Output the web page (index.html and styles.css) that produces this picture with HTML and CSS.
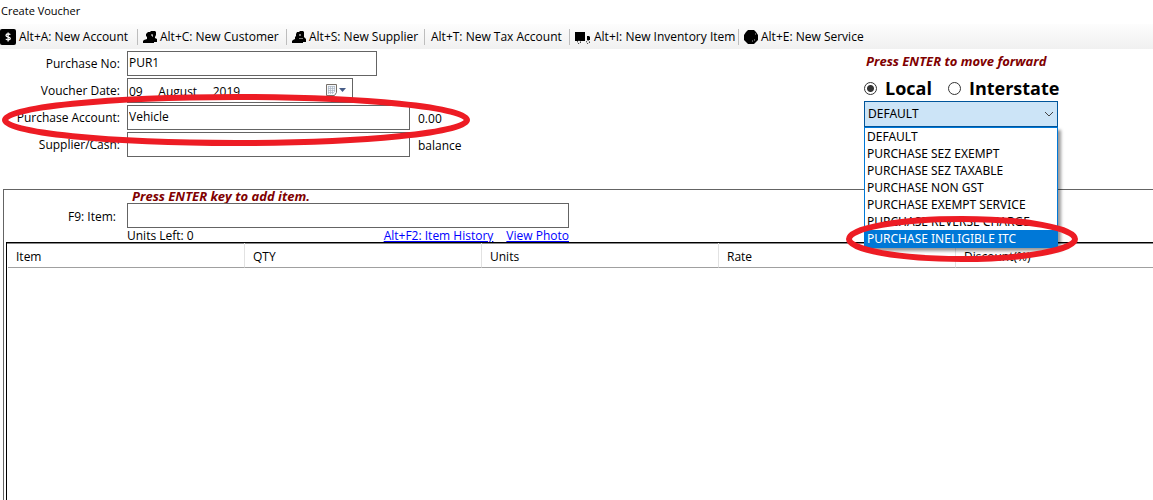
FILE: index.html
```html
<!DOCTYPE html>
<html lang="en">
<head>
<meta charset="utf-8">
<title>Create Voucher</title>
<link rel="stylesheet" href="styles.css">
</head>
<body>
<h1 class="title">Create Voucher</h1>
<nav class="toolbar" aria-label="Shortcuts">
  <button class="tool" type="button">
    <svg class="icon flush" viewBox="0 0 16 16" aria-hidden="true"><rect width="16" height="16" rx="2"/><path d="M10.2 5.8C9.8 4.7 6 4.4 6 6.4c0 1.900 4.300 1 4.300 3.100 0 1.900-3.900 1.800-4.400.4M8.100 3.600v8.800" fill="none" stroke="#fff" stroke-width="1.300"/></svg>
    Alt+A: New Account</button>
  <button class="tool" type="button">
    <svg class="icon" viewBox="0 0 14 14" aria-hidden="true"><path d="M5 2h2l1-1h4l1 1v3l-1 2v1l2 1v3h-3v1H0v-2l1-1 3-1V7L3 6V4z"/><path d="M9 4v2h1" fill="none" stroke="#fff"/></svg>
    Alt+C: New Customer</button>
  <button class="tool" type="button">
    <svg class="icon" viewBox="0 0 14 14" aria-hidden="true"><path d="M5 2h2l1-1h3l1 1v5l2 2v3h-3v1H0v-2l1-1 2-1V7L4 6V4z"/><path d="M8 4v2M8 8v1M10 8v1" fill="none" stroke="#fff"/></svg>
    Alt+S: New Supplier</button>
  <button class="tool" type="button">Alt+T: New Tax Account</button>
  <button class="tool" type="button">
    <svg class="icon truck" viewBox="0 0 16 14" aria-hidden="true"><path d="M0 2h10v9H0zM12 6h2l1 1v3h-3z"/><g fill="#fff" stroke="#000" stroke-dasharray="1 1"><circle cx="4" cy="12" r="1.500"/><circle cx="13" cy="12" r="1.500"/></g></svg>
    Alt+I: New Inventory Item</button>
  <button class="tool" type="button">
    <svg class="icon" viewBox="0 0 14 14" aria-hidden="true"><path d="M4 0h6l2 2 2 3v5l-2 2-2 2H4l-2-2-2-2V5l2-3z"/><path d="M10 10h1M8 11h1M11 4h1" stroke="#aaa"/></svg>
    Alt+E: New Service</button>
</nav>

<main class="voucher">
  <div class="top">
    <form class="fields">
      <label for="no">Purchase No:</label>
      <div><input class="box w-no" id="no" value="PUR1"></div>
      <label for="date">Voucher Date:</label>
      <div class="date">
        <input class="box w-date" id="date" value="09     August     2019">
        <svg class="calendar" viewBox="0 0 22 12" aria-hidden="true"><path d="M.5.5h10v8l-2 3h-8z" fill="#f4f7fa" stroke="#777069"/><path d="M2 2.500h7M2 4.500h7M2 6.500h7M2 8.500h6M2.500 2v8M4.500 2v8M6.500 2v8M8.500 2v6" stroke="#aab6c4" fill="none" stroke-width=".7"/><path d="M13 4h7l-3.500 4z" fill="#465c87"/></svg>
      </div>
      <label for="account">Purchase Account:</label>
      <div class="pair"><input class="box w-wide" id="account" value="Vehicle"><output>0.00</output></div>
      <label for="supplier">Supplier/Cash:</label>
      <div class="pair"><input class="box w-wide" id="supplier"><output>balance</output></div>
      <svg class="ring ring-account" viewBox="0 0 468 52" aria-hidden="true"><ellipse cx="234" cy="26" rx="231" ry="23"/></svg>
    </form>
    <section class="tax">
      <p class="hint">Press ENTER to move forward</p>
      <div class="scope">
        <label><input type="radio" name="scope" checked>Local</label>
        <label><input type="radio" name="scope">Interstate</label>
      </div>
      <div class="combo">
        <select class="combo-value" aria-label="Tax type"><option>DEFAULT</option></select>
        <svg class="chevron" viewBox="0 0 10 6" aria-hidden="true"><path d="M1 1l4 4 4-4"/></svg>
        <ul class="menu" role="listbox" aria-label="Tax types">
          <li role="option">DEFAULT</li>
          <li role="option">PURCHASE SEZ EXEMPT</li>
          <li role="option">PURCHASE SEZ TAXABLE</li>
          <li role="option">PURCHASE NON GST</li>
          <li role="option">PURCHASE EXEMPT SERVICE</li>
          <li role="option">PURCHASE REVERSE CHARGE</li>
          <li role="option" class="active" aria-selected="true">PURCHASE INELIGIBLE ITC</li>
        </ul>
        <svg class="ring ring-option" viewBox="0 0 232 46" aria-hidden="true"><ellipse cx="116" cy="23" rx="113" ry="20"/></svg>
      </div>
    </section>
  </div>

  <section class="items">
    <div class="entry">
      <p class="hint entry-hint">Press ENTER key to add item.</p>
      <label for="item">F9: Item:</label>
      <input class="box" id="item">
      <div class="below">
        <span>Units Left: 0</span>
        <div class="links"><a href="#history">Alt+F2: Item History</a><a href="#photo">View Photo</a></div>
      </div>
    </div>
    <div class="grid">
      <table>
        <thead><tr><th>Item</th><th>QTY</th><th>Units</th><th>Rate</th><th>Discount(%)</th></tr></thead>
      </table>
    </div>
  </section>
</main>
</body>
</html>
```

FILE: styles.css
```css
* { box-sizing: border-box; }
body {
  margin: 0;
  min-height: 100vh;
  display: flex;
  flex-direction: column;
  overflow: hidden;
  background: #fff;
  color: #000;
  font: 12px/16px "Open Sans", "Noto Sans", sans-serif;
}
p, ul { margin: 0; padding: 0; }
button, input, select { font: inherit; color: inherit; }
.title { margin: 0; padding: 3px 1px 5px; font-size: 11px; line-height: 16px; font-weight: 400; }
.toolbar {
  display: grid;
  grid-template-columns: 138px 149px 138px 145px 169px auto;
  height: 25px;
  padding: 5px 0;
  background: linear-gradient(#fdfdfd, #f0f0f0);
}
.tool {
  display: flex;
  align-items: center;
  gap: 3px;
  padding: 0 0 0 5px;
  border: 0;
  border-right: 1px solid #bdbdbd;
  background: none;
  white-space: nowrap;
  line-height: 14px;
}
.tool:first-child { padding-left: 0; }
.tool:nth-child(4) { padding-left: 6px; }
.tool:last-child { border: 0; }
.icon { flex: none; width: 14px; height: 14px; }
.icon.flush { width: 16px; height: 16px; }
.icon.truck { width: 16px; }
.voucher { flex: 1; display: flex; flex-direction: column; }
.top { display: grid; grid-template-columns: 1fr 289px; height: 140px; }
.fields {
  position: relative;
  display: grid;
  grid-template-columns: 120px 1fr;
  grid-auto-rows: 25px;
  gap: 2px 7px;
  padding-top: 2px;
  align-content: start;
}
.fields label { text-align: right; line-height: 26px; white-space: nowrap; }
.box {
  display: block;
  height: 25px;
  padding: 0 1px 3px;
  border: 1px solid #646464;
  background: #fff;
  outline: 0;
}
.w-no { width: 250px; }
.w-date { width: 226px; padding: 2px 1px 0; }
.w-wide { width: 283px; }
.date { position: relative; width: 226px; }
.calendar { position: absolute; right: 5px; top: 6px; width: 22px; height: 12px; }
.pair { display: flex; gap: 8px; line-height: 27px; }
.ring { position: absolute; fill: none; stroke: #ed1c24; stroke-width: 6px; pointer-events: none; }
.ring-account { left: 2px; top: 45px; width: 468px; height: 52px; }
.ring-option { left: -18px; top: 115px; width: 232px; height: 46px; }
.hint { color: maroon; font-size: 13px; font-weight: 700; font-style: italic; }
.tax .hint { padding: 4px 2px 2px; }
.scope { display: flex; gap: 16px; height: 30px; padding-top: 4px; font-size: 18px; font-weight: 700; }
.scope label { display: flex; align-items: center; gap: 8px; }
.scope input {
  appearance: none;
  width: 13px;
  height: 13px;
  margin: 0;
  border: 1px solid #333;
  border-radius: 50%;
  background: #fff;
}
.scope input:checked { background: radial-gradient(circle, #333 3px, #fff 4px); }
.combo { position: relative; width: 194px; font-family: "Noto Sans", "Open Sans", sans-serif; }
.combo-value {
  display: block;
  appearance: none;
  width: 100%;
  height: 26px;
  padding: 0 3px;
  border: 1px solid #00559b;
  border-radius: 0;
  background: #cce4f7;
}
.chevron { position: absolute; right: 4px; top: 10px; width: 10px; height: 6px; fill: none; stroke: #444; }
.menu {
  position: absolute;
  top: 26px;
  left: 0;
  width: 100%;
  border: 1px solid #0078d7;
  background: #fff;
  box-shadow: 3px 3px 3px #0006;
  list-style: none;
  line-height: 17px;
}
.menu li { padding-left: 2px; white-space: nowrap; }
.menu .active { background: #0078d7; color: #fff; }
.items {
  flex: 1;
  display: flex;
  flex-direction: column;
  margin-left: 3px;
  border: solid #646464;
  border-width: 1px 0 0 1px;
}
.entry {
  display: grid;
  grid-template-columns: 112px 442px;
  grid-template-rows: 13px 25px 14px;
  column-gap: 11px;
}
.entry-hint { grid-column: 2; padding-left: 5px; line-height: 13px; }
.entry label { text-align: right; line-height: 27px; }
.below { grid-column: 2; display: flex; justify-content: space-between; line-height: 15px; }
.links { display: flex; gap: 13px; }
.links a { color: #00f; }
.grid {
  flex: 1;
  margin-left: 2px;
  overflow: hidden;
  border: solid #000;
  border-width: 1px 0 0 1px;
  padding-left: 1px;
  box-shadow: inset 0 1px #888;
}
table { width: 1185px; border-collapse: separate; border-spacing: 0; table-layout: fixed; }
th {
  height: 25px;
  padding: 4px 8px 0;
  border: solid #e2e2e2;
  border-width: 0 1px 0 0;
  border-bottom: 1px solid #a0a0a0;
  text-align: left;
  font-weight: 400;
}
```
